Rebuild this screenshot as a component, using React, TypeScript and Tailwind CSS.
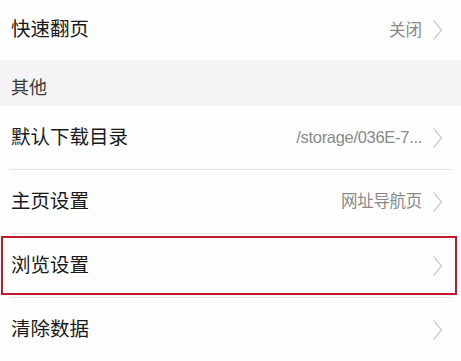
import React from "react";

interface RowProps {
  label: string;
  value?: string;
  highlight?: boolean;
  divider?: boolean;
}

const Chevron = () => (
  <svg width="11" height="22" viewBox="0 0 11 22" fill="none" className="ml-[10px] shrink-0">
    <path d="M1.5 1.5 L9.5 11 L1.5 20.5" stroke="#cdcdcd" strokeWidth="1.4" />
  </svg>
);

const Row: React.FC<RowProps> = ({ label, value, highlight, divider = true }) => {
  return (
    <div className="relative">
      <div className="flex h-[63px] items-center pl-[11px] pr-[18px]">
        <span className="text-[19.5px] text-[#1a1a1a]">{label}</span>
        <div className="ml-auto flex items-center">
          {value && <span className="text-[16.5px] tracking-[-0.3px] text-[#8a8a8a]">{value}</span>}
          <Chevron />
        </div>
      </div>
      {divider && <div className="mx-[10px] h-px bg-[#e3e3e3]" />}
      {highlight && (
        <span className="pointer-events-none absolute left-[1px] top-[2px] h-[59px] w-[456px] border-[2.5px] border-[#c2182d]" />
      )}
    </div>
  );
};

export default function App() {
  return (
    <div
      className="h-[361px] w-[461px] overflow-hidden bg-[#fdfdfd]"
      style={{ fontFamily: '"Liberation Sans", "Noto Sans CJK SC", sans-serif' }}
    >
      <div className="flex h-[60px] items-center pl-[11px] pr-[18px]">
        <span className="text-[19.5px] text-[#1a1a1a]">快速翻页</span>
        <div className="ml-auto flex items-center">
          <span className="text-[16.5px] text-[#8a8a8a]">关闭</span>
          <Chevron />
        </div>
      </div>
      <div className="flex h-[46px] items-center bg-[#f4f4f4] pl-[11px] pt-[10px]">
        <span className="text-[18px] text-[#3a3a3a]">其他</span>
      </div>
      <Row label="默认下载目录" value="/storage/036E-7..." />
      <Row label="主页设置" value="网址导航页" />
      <Row label="浏览设置" highlight />
      <Row label="清除数据" />
    </div>
  );
}
